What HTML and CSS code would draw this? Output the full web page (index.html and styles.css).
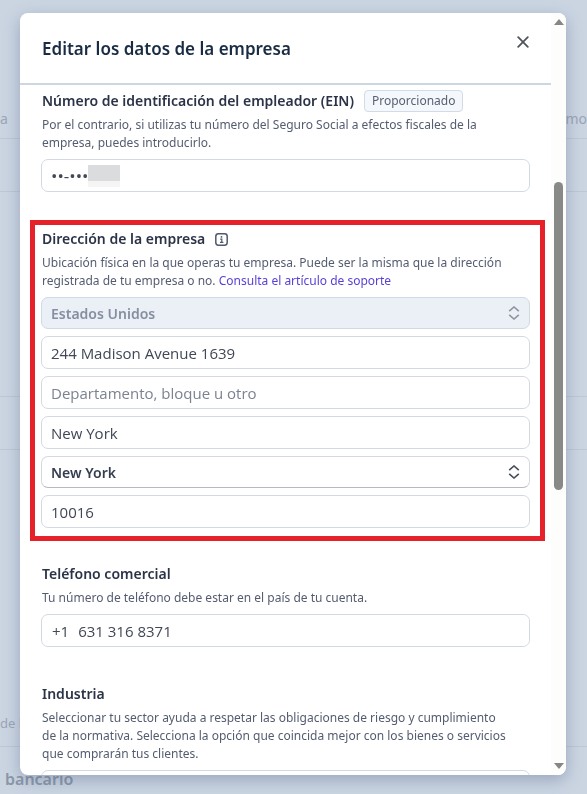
FILE: index.html
```html
<!DOCTYPE html>
<html lang="es">
<head>
  <meta charset="UTF-8">
  <meta name="viewport" content="width=device-width, initial-scale=1.0">
  <title>Editar los datos de la empresa</title>
  <link rel="stylesheet" href="styles.css">
</head>
<body>
  <!-- Dimmed page behind the dialog -->
  <div class="page" aria-hidden="true">
    <div class="page-row row-head"><span>a</span><span>mo</span></div>
    <div class="page-row row-short"></div>
    <div class="page-row row-tall"></div>
    <div class="page-row row-short"></div>
    <div class="page-row row-fill"><span>de l</span></div>
    <div class="page-title">bancario</div>
  </div>

  <div class="modal" role="dialog" aria-labelledby="modal-title">
    <div class="modal-main">
      <header class="modal-header">
        <h1 id="modal-title">Editar los datos de la empresa</h1>
        <button class="close" type="button" aria-label="Cerrar">
          <svg width="12" height="12" viewBox="0 0 12 12" fill="none" stroke="#50555c" stroke-width="1.8" stroke-linecap="round"><path d="M1.2 1.2l9.6 9.6M10.8 1.2L1.2 10.8"/></svg>
        </button>
      </header>

      <form class="modal-body">
        <section class="group">
          <div class="group-title">
            <label for="ein">Número de identificación del empleador (EIN)</label>
            <span class="badge">Proporcionado</span>
          </div>
          <p class="hint">Por el contrario, si utilizas tu número del Seguro Social a efectos fiscales de la<br>empresa, puedes introducirlo.</p>
          <div class="field">
            <input id="ein" class="masked" type="text" value="••-•••">
            <span class="redacted"></span>
          </div>
        </section>

        <section class="group highlight">
          <div class="group-title">
            <h2>Dirección de la empresa</h2>
            <svg width="13" height="13" viewBox="0 0 13 13" fill="none"><rect x="0.8" y="0.8" width="11.4" height="11.4" rx="2.6" stroke="#50596b" stroke-width="1.5"/><path d="M5.2 6.2h1.6v3M5 9.3h3.4" stroke="#50596b" stroke-width="1.2"/><circle cx="6.5" cy="3.9" r="0.9" fill="#50596b"/></svg>
          </div>
          <p class="hint">Ubicación física en la que operas tu empresa. Puede ser la misma que la dirección<br>registrada de tu empresa o no. <a href="#">Consulta el artículo de soporte</a></p>
          <div class="fields">
            <div class="field">
              <select aria-label="País" disabled><option>Estados Unidos</option></select>
              <svg class="chevrons" width="12" height="14" viewBox="0 0 12 14" fill="none" stroke="#8f96a1" stroke-width="1.6"><path d="M1.2 5.2L6 1l4.8 4.2M1.2 8.8L6 13l4.8-4.2"/></svg>
            </div>
            <input type="text" aria-label="Dirección" value="244 Madison Avenue 1639">
            <input type="text" aria-label="Departamento" placeholder="Departamento, bloque u otro">
            <input type="text" aria-label="Ciudad" value="New York">
            <div class="field">
              <select aria-label="Estado"><option>New York</option></select>
              <svg class="chevrons" width="12" height="14" viewBox="0 0 12 14" fill="none" stroke="#474e5a" stroke-width="1.6"><path d="M1.2 5.2L6 1l4.8 4.2M1.2 8.8L6 13l4.8-4.2"/></svg>
            </div>
            <input type="text" aria-label="Código postal" value="10016">
          </div>
        </section>

        <section class="group">
          <div class="group-title"><label for="phone">Teléfono comercial</label></div>
          <p class="hint">Tu número de teléfono debe estar en el país de tu cuenta.</p>
          <div class="field phone">
            <span>+1</span>
            <input id="phone" type="tel" value="631 316 8371">
          </div>
        </section>

        <section class="group">
          <div class="group-title"><label for="industry">Industria</label></div>
          <p class="hint">Seleccionar tu sector ayuda a respetar las obligaciones de riesgo y cumplimiento<br>de la normativa. Selecciona la opción que coincida mejor con los bienes o servicios<br>que comprarán tus clientes.</p>
          <input id="industry" type="text">
        </section>
      </form>
    </div>

    <div class="scrollbar" aria-hidden="true">
      <svg width="10" height="6" viewBox="0 0 10 6"><path d="M0 6L5 0l5 6z" fill="#858784"/></svg>
      <div class="track"><div class="thumb"></div></div>
      <svg width="10" height="6" viewBox="0 0 10 6"><path d="M0 0h10L5 6z" fill="#858784"/></svg>
    </div>
  </div>
</body>
</html>
```

FILE: styles.css
```css
* {
  box-sizing: border-box;
}

body {
  margin: 0;
  height: 100vh;
  overflow: hidden;
  background: #cbd5e2;
  color: #353d50;
  font-family: "Noto Sans", sans-serif;
  font-size: 14px;
}

h1, h2, p {
  margin: 0;
}

/* Page behind */
.page {
  display: flex;
  flex-direction: column;
  height: 100%;
  color: #9ba6b6;
}

.page-row {
  display: flex;
  justify-content: space-between;
  align-items: flex-end;
  padding-bottom: 10px;
  border-bottom: 1px solid #bcc8d6;
}

.row-head { height: 139px; }
.row-short { height: 53px; }
.row-tall { height: 205px; }

.row-fill {
  flex: 1;
  padding-bottom: 14px;
  font-size: 13px;
}

.page-title {
  height: 47px;
  padding: 20px 5px 0;
  font-size: 16px;
  font-weight: 600;
  line-height: 24px;
  color: #8c98a9;
}

/* Dialog */
.modal {
  position: fixed;
  inset: 13px 21px 19px 20px;
  display: flex;
  overflow: hidden;
  background: #fff;
  border-radius: 8px;
  box-shadow: 0 5px 16px rgba(60, 80, 120, 0.35);
}

.modal-main {
  flex: 1;
  display: flex;
  flex-direction: column;
  min-width: 0;
}

.modal-header {
  display: flex;
  flex: none;
  justify-content: space-between;
  align-items: center;
  height: 72px;
  padding: 2px 22px 0;
  border-bottom: 2px solid #cdd7e2;
}

.modal-header h1 {
  font-size: 17px;
  font-weight: 600;
  line-height: 24px;
  color: #1a2c44;
}

.close {
  display: flex;
  align-self: flex-start;
  margin-top: 21px;
  padding: 0;
  border: 0;
  background: none;
}

.modal-body {
  display: flex;
  flex: 1;
  flex-direction: column;
  gap: 35px;
  min-height: 0;
  padding: 4px 21px 0;
  overflow: hidden;
}

.group {
  flex: none;
}

.group-title {
  display: flex;
  align-items: center;
  gap: 10px;
  height: 24px;
  padding-left: 1px;
  white-space: nowrap;
}

.group-title label,
.group-title h2 {
  font-size: 14px;
  font-weight: 600;
  line-height: 22px;
  color: #2b3346;
}

.badge {
  padding: 0 7px;
  border: 1px solid #d3dce6;
  border-radius: 4px;
  background: #f4f7fb;
  color: #596171;
  font-size: 12px;
  line-height: 20px;
}

.hint {
  margin: 3px 0 7px;
  padding-left: 1px;
  color: #545c70;
  font-size: 12px;
  line-height: 18px;
}

.hint a {
  color: #5a3fd6;
  text-decoration: none;
}

.highlight {
  margin: -7px -15px -14px -11px;
  padding: 2px 10px 8px 6px;
  border: 5px solid #e62129;
}

.fields {
  display: flex;
  flex-direction: column;
  gap: 7px;
}

.field {
  position: relative;
}

input,
select {
  display: block;
  width: 100%;
  height: 33px;
  padding: 0 9px;
  border: 1px solid #d3d9e2;
  border-radius: 7px;
  background: #fff;
  color: #414756;
  font: inherit;
  outline: none;
}

input,
.phone {
  font-family: "Open Sans", sans-serif;
  font-size: 15px;
}

input::placeholder {
  color: #7b8291;
}

.masked {
  font-size: 17px;
}

select {
  height: 32px;
  border-bottom-color: #b4bac4;
  appearance: none;
  color: #353d50;
  font-weight: 600;
}

select:disabled {
  border-color: #d0d9e4;
  background: #ebeff6;
  color: #868fa0;
  opacity: 1;
}

.chevrons {
  position: absolute;
  top: 9px;
  right: 10px;
  pointer-events: none;
}

.redacted {
  position: absolute;
  top: 6px;
  left: 47px;
  width: 32px;
  height: 16px;
  background: #dbdcde;
  box-shadow: 0 6px 0 #f5f5f6;
}

.phone {
  display: flex;
  align-items: center;
  gap: 9px;
  height: 33px;
  padding-left: 10px;
  border: 1px solid #d3d9e2;
  border-radius: 7px;
  color: #414756;
}

.phone input {
  flex: 1;
  height: 31px;
  padding: 0;
  border: 0;
}

/* Scrollbar */
.scrollbar {
  display: flex;
  flex: none;
  flex-direction: column;
  align-items: center;
  width: 15px;
  padding: 6px 0;
  background: #fdfdfc;
}

.track {
  flex: 1;
  width: 9px;
  padding-top: 157px;
}

.thumb {
  height: 308px;
  border-radius: 5px;
  background: #888a87;
}
```
